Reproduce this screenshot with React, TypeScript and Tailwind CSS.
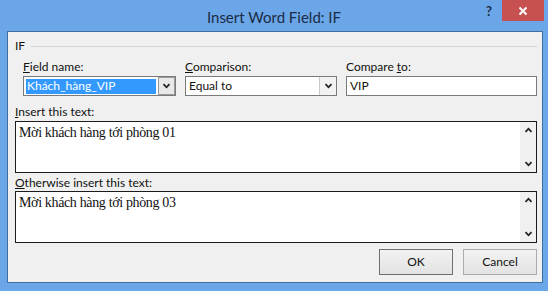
import React from 'react';

const ui = "font-['Lato','Liberation_Sans',sans-serif]";

const ChevronDown: React.FC = () => (
  <svg width="9" height="6" viewBox="0 0 9 6">
    <path d="M1.5 1.2 L4.5 4.3 L7.5 1.2" fill="none" stroke="#222" strokeWidth="1.8" />
  </svg>
);

const ChevronUp: React.FC = () => (
  <svg width="9" height="6" viewBox="0 0 9 6">
    <path d="M1.5 4.8 L4.5 1.7 L7.5 4.8" fill="none" stroke="#222" strokeWidth="1.8" />
  </svg>
);

const Combo: React.FC<{ value: string; selected?: boolean }> = ({ value, selected }) => (
  <div className="flex h-[20px] border border-[#7a7a7a] bg-white">
    <div className="flex flex-1 items-center px-[2px]">
      {selected ? (
        <span className="flex h-[15px] w-full items-center bg-[#3399ff] px-[1px] text-white">{value}</span>
      ) : (
        <span className="px-[1px] text-[#111]">{value}</span>
      )}
    </div>
    <div
      className={
        selected
          ? 'flex w-[17px] items-center justify-center border border-[#9a9a9a] bg-[#e8e8e8]'
          : 'flex w-[17px] items-center justify-center border-l border-[#c9c9c9] bg-[#f2f2f2]'
      }
    >
      <ChevronDown />
    </div>
  </div>
);

const TextBox: React.FC<{ text: string }> = ({ text }) => (
  <div className="flex h-[52px] border border-[#1c1c1c] bg-white">
    <div className="flex-1 px-[3px] pt-[2px] font-['Liberation_Serif',serif] text-[14px] leading-[18px] tracking-[-0.35px] text-[#111]">
      {text}
    </div>
    <div className="flex w-[16px] flex-col items-center justify-between bg-[#f0f0f0] py-[5px]">
      <ChevronUp />
      <ChevronDown />
    </div>
  </div>
);

const Button: React.FC<{ label: string; isDefault?: boolean }> = ({ label, isDefault }) => (
  <div
    className={
      'flex h-[26px] w-[74px] items-center justify-center border bg-gradient-to-b from-[#f2f2f2] to-[#e3e3e3] text-[12px] text-[#111] ' +
      (isDefault ? 'border-[#707070]' : 'border-[#acacac]')
    }
  >
    {label}
  </div>
);

const App: React.FC = () => {
  return (
    <div className={`flex h-[291px] w-[548px] flex-col bg-[#6ba6e8] ${ui}`}>
      {/* Title bar */}
      <div className="grid h-[31px] grid-cols-[1fr_auto_1fr]">
        <div />
        <div className="pt-[7px] text-[15px] leading-[20px] text-[#1b2c44]">Insert Word Field: IF</div>
        <div className="flex items-start justify-end pr-[4px]">
          <span className="mr-[10px] mt-[2px] text-[13px] font-bold text-[#1b2c44]">?</span>
          <div className="flex h-[21px] w-[42px] items-center justify-center bg-[#c75050]">
            <svg width="10" height="10" viewBox="0 0 10 10">
              <path d="M1.5 1.5 L8.5 8.5 M8.5 1.5 L1.5 8.5" stroke="#fff" strokeWidth="2" />
            </svg>
          </div>
        </div>
      </div>

      {/* Client area */}
      <div className="mb-[8px] ml-[7px] mr-[5px] flex flex-1 flex-col border border-[#3f6f9f] bg-[#f0f0f0] pb-[7px] pl-[7px] pr-[5px] text-[12px] text-[#111]">
        {/* Group header */}
        <div className="mt-[7px] flex h-[14px] items-center">
          <span className="leading-[14px]">IF</span>
          <div className="ml-[6px] h-px flex-1 bg-[#d5d5d5]" />
        </div>

        {/* Field row */}
        <div className="mt-[6px] flex gap-[9px] pl-[8px]">
          <div className="flex w-[153px] flex-col">
            <span className="h-[16px] leading-[16px]">
              <u>F</u>ield name:
            </span>
            <div className="mt-[1px]">
              <Combo value="Khách_hàng_VIP" selected />
            </div>
          </div>
          <div className="flex w-[152px] flex-col">
            <span className="h-[16px] leading-[16px]">
              <u>C</u>omparison:
            </span>
            <div className="mt-[1px]">
              <Combo value="Equal to" />
            </div>
          </div>
          <div className="flex flex-1 flex-col">
            <span className="h-[16px] leading-[16px]">
              Compare <u>t</u>o:
            </span>
            <div className="mt-[1px] flex h-[20px] items-center border border-[#7a7a7a] bg-white px-[3px]">VIP</div>
          </div>
        </div>

        {/* Insert this text */}
        <span className="mt-[8px] h-[16px] leading-[16px]">
          <u>I</u>nsert this text:
        </span>
        <div className="mt-[1px]">
          <TextBox text="Mời khách hàng tới phòng 01" />
        </div>

        {/* Otherwise */}
        <span className="mt-[2px] h-[16px] leading-[16px]">
          <u>O</u>therwise insert this text:
        </span>
        <div>
          <TextBox text="Mời khách hàng tới phòng 03" />
        </div>

        {/* Buttons */}
        <div className="mt-[6px] flex justify-end gap-[10px]">
          <Button label="OK" isDefault />
          <Button label="Cancel" />
        </div>
      </div>
    </div>
  );
};

export default App;
